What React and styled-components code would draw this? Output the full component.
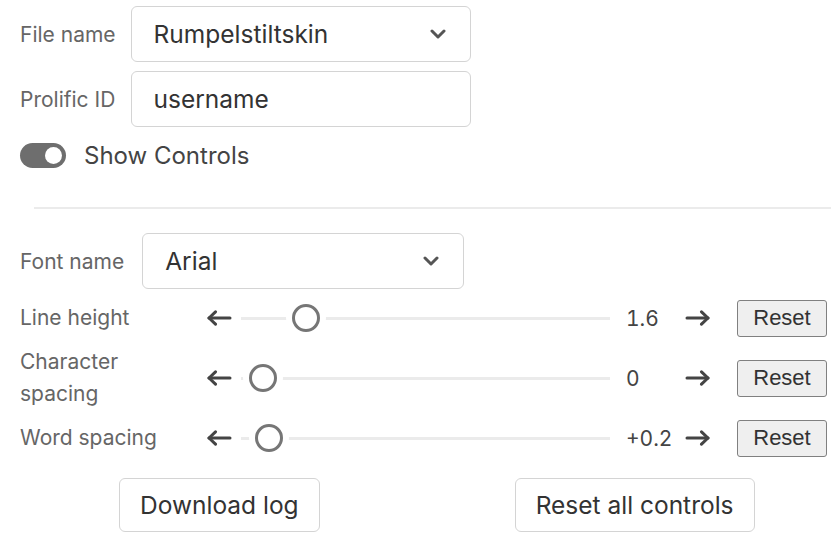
import React from 'react';
import styled, { createGlobalStyle } from 'styled-components';

const GlobalStyle = createGlobalStyle`
  body {
    margin: 0;
    background: #fff;
    font-family: Inter, "Liberation Sans", sans-serif;
  }
`;

const Page = styled.div`
  width: 831px;
  height: 536px;
  overflow: hidden;
  padding-top: 6px;
  box-sizing: border-box;
`;

const FieldGrid = styled.div`
  display: grid;
  grid-template-columns: auto 340px;
  column-gap: 15px;
  row-gap: 9px;
  align-items: center;
  padding-left: 20px;
  justify-content: start;
`;

const FieldLabel = styled.label`
  font-size: 21px;
  color: #666;
  white-space: nowrap;
`;

const Box = styled.div`
  position: relative;
  height: 56px;
  box-sizing: border-box;
  border: 1.5px solid #d4d4d4;
  border-radius: 6px;
  display: flex;
  align-items: center;
  padding: 0 22px;
  font-size: 24.5px;
  color: #333;
  width: ${(p) => p.width || 'auto'};
`;

const Chevron = styled.svg`
  position: absolute;
  right: 24px;
  top: 50%;
  margin-top: -5px;
`;

const ToggleRow = styled.div`
  display: flex;
  align-items: center;
  gap: 18px;
  padding: 14px 0 0 20px;
  font-size: 24px;
  color: #444;
`;

const Toggle = styled.span`
  width: 46px;
  height: 25px;
  border-radius: 13px;
  background: #6e6e6e;
  display: flex;
  align-items: center;
  justify-content: ${(p) => (p.on ? 'flex-end' : 'flex-start')};
  padding: 0 4px;
  box-sizing: border-box;

  &::after {
    content: '';
    width: 17px;
    height: 17px;
    border-radius: 50%;
    background: #fff;
  }
`;

const Divider = styled.hr`
  border: 0;
  border-top: 2px solid #ebebeb;
  margin: 37px 0 24px 34px;
`;

const FontRow = styled.div`
  display: flex;
  align-items: center;
  gap: 18px;
  padding-left: 20px;
`;

const SliderList = styled.div`
  display: flex;
  flex-direction: column;
  gap: 2px;
  margin-top: 3px;
`;

const SliderRow = styled.div`
  display: grid;
  grid-template-columns: 180px 32px 1fr 59px 52px 90px;
  align-items: center;
  min-height: 52px;
  padding: 0 4px 0 20px;
`;

const RowLabel = styled.div`
  font-size: 21px;
  color: #666;
  line-height: 32px;
  width: 150px;
`;

const Arrow = styled.svg`
  display: block;
  justify-self: ${(p) => (p.right ? 'start' : 'end')};
`;

const Track = styled.div`
  position: relative;
  height: 3px;
  background: #ebebeb;
  margin: 0 16px 0 9px;
`;

const Thumb = styled.span`
  position: absolute;
  top: 50%;
  width: 28px;
  height: 28px;
  margin: -14px 0 0 -14px;
  box-sizing: border-box;
  border: 3px solid #767676;
  border-radius: 50%;
  background: #fff;
  box-shadow: 0 0 0 6px #fff;
`;

const Value = styled.span`
  font-size: 21px;
  font-variant-numeric: tabular-nums;
  color: #444;
`;

const ResetButton = styled.button`
  width: 90px;
  height: 37px;
  font-family: "Liberation Sans", Arial, sans-serif;
  font-size: 22px;
  color: #333;
  background: #efefef;
  border: 1.5px solid #808080;
  border-radius: 3px;
  padding: 0;
`;

const Footer = styled.div`
  display: flex;
  gap: 195px;
  padding: 14px 0 0 119px;
`;

const FooterButton = styled.button`
  height: 54px;
  padding: 0 20px;
  font-family: Inter, "Liberation Sans", sans-serif;
  font-size: 24.5px;
  color: #333;
  background: #fff;
  border: 1.5px solid #d4d4d4;
  border-radius: 6px;
`;

const ChevronIcon = () => (
  <Chevron width="16" height="10" viewBox="0 0 16 10">
    <path d="M2 2 L8 8 L14 2" fill="none" stroke="#555" strokeWidth="3" strokeLinecap="round" strokeLinejoin="round" />
  </Chevron>
);

const ArrowIcon = ({ right }) => (
  <Arrow right={right} width="26" height="16" viewBox="0 0 26 16">
    <g fill="none" stroke="#444" strokeWidth="3" strokeLinecap="round" strokeLinejoin="round" transform={right ? 'matrix(-1 0 0 1 26 0)' : undefined}>
      <path d="M3 8 H24" />
      <path d="M9.5 1.8 L3 8 L9.5 14.2" />
    </g>
  </Arrow>
);

const sliders = [
  { label: 'Line height', value: '1.6', pos: 17.6 },
  { label: 'Character spacing', value: '0', pos: 6.0 },
  { label: 'Word spacing', value: '+0.2', pos: 7.6 },
];

const App = () => {
  return (
    <>
      <GlobalStyle />
      <Page>
        <FieldGrid>
          <FieldLabel>File name</FieldLabel>
          <Box>
            Rumpelstiltskin
            <ChevronIcon />
          </Box>
          <FieldLabel>Prolific ID</FieldLabel>
          <Box>username</Box>
        </FieldGrid>

        <ToggleRow>
          <Toggle on />
          Show Controls
        </ToggleRow>

        <Divider />

        <FontRow>
          <FieldLabel>Font name</FieldLabel>
          <Box width="322px">
            Arial
            <ChevronIcon />
          </Box>
        </FontRow>

        <SliderList>
          {sliders.map((s) => (
            <SliderRow key={s.label}>
              <RowLabel>{s.label}</RowLabel>
              <ArrowIcon />
              <Track>
                <Thumb style={{ left: `${s.pos}%` }} />
              </Track>
              <Value>{s.value}</Value>
              <ArrowIcon right />
              <ResetButton>Reset</ResetButton>
            </SliderRow>
          ))}
        </SliderList>

        <Footer>
          <FooterButton>Download log</FooterButton>
          <FooterButton>Reset all controls</FooterButton>
        </Footer>
      </Page>
    </>
  );
};

export default App;
